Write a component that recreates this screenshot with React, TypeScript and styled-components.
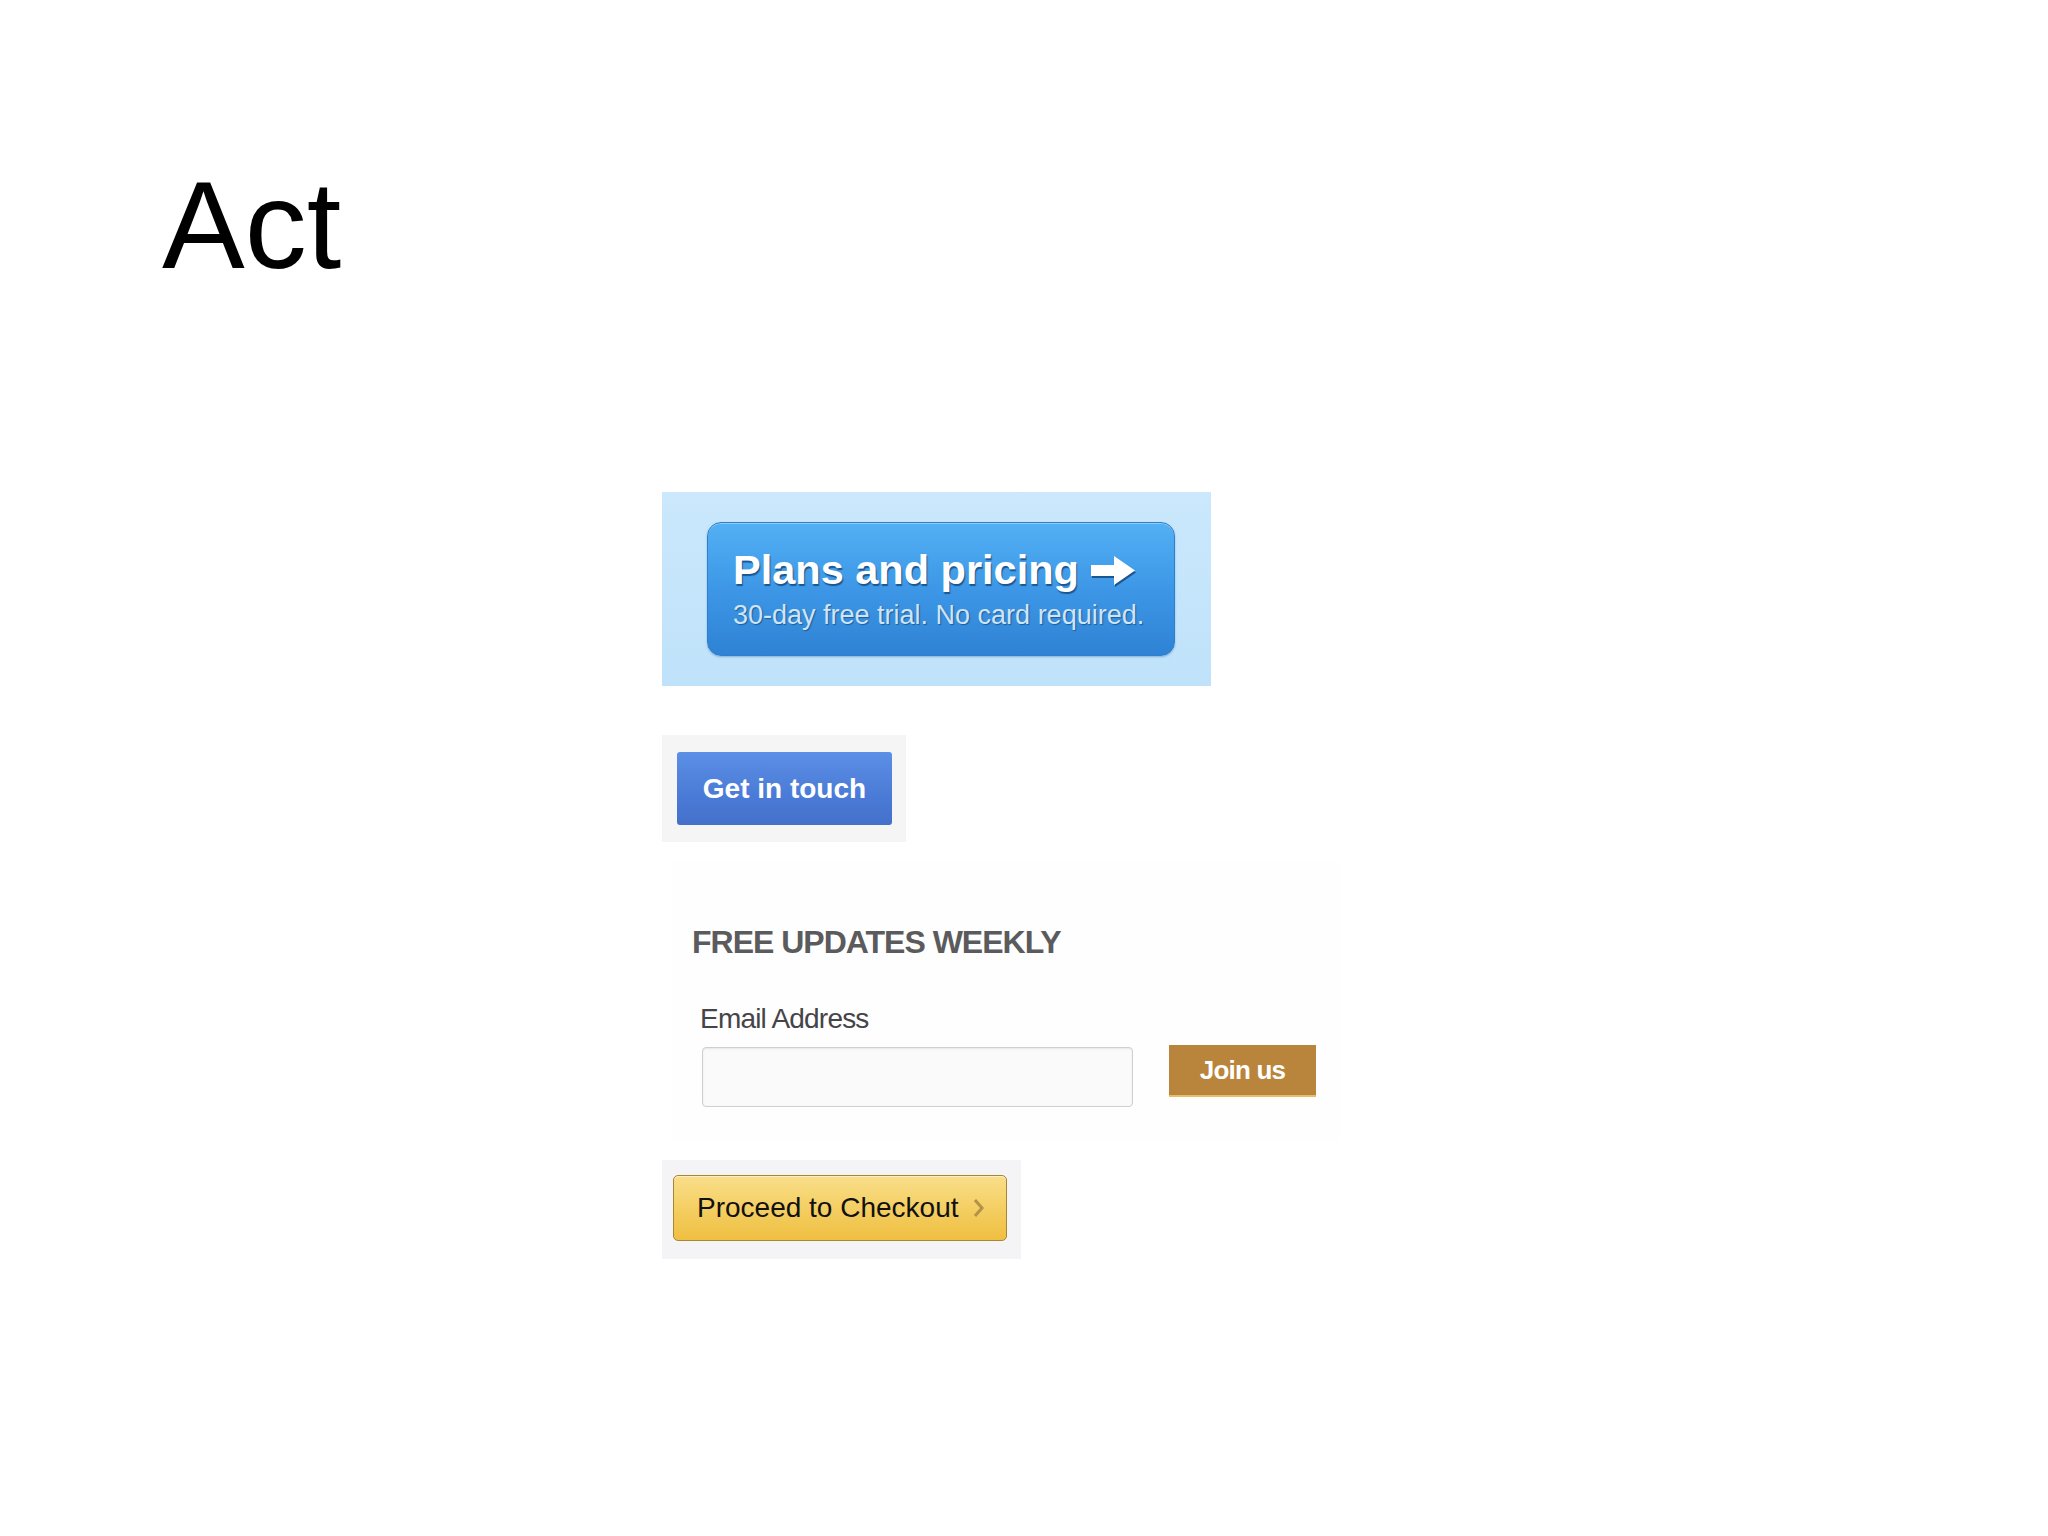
import React from 'react';
import styled, { createGlobalStyle } from 'styled-components';

const GlobalStyle = createGlobalStyle`
  html, body {
    margin: 0;
    padding: 0;
    background: #ffffff;
  }
  body {
    font-family: 'Liberation Sans', Arial, sans-serif;
  }
`;

const Page = styled.div`
  width: 2048px;
  min-height: 1536px;
  box-sizing: border-box;
  padding: 163px 0 0 162px;
`;

const Title = styled.h1`
  margin: 0;
  font-size: 124px;
  line-height: 124px;
  font-weight: 400;
  color: #000;
`;

const Column = styled.div`
  display: flex;
  flex-direction: column;
  align-items: flex-start;
  margin: 205px 0 0 500px;
`;

const PricingPanel = styled.div`
  width: 549px;
  box-sizing: border-box;
  padding: 30px 36px 30px 45px;
  background: linear-gradient(180deg, #cbe8fc 0%, #bfe2fa 100%);
`;

const PricingButton = styled.button`
  display: flex;
  flex-direction: column;
  align-items: flex-start;
  width: 468px;
  height: 134px;
  box-sizing: border-box;
  padding: 24px 0 0 25px;
  border: 1px solid #2f7fcc;
  border-radius: 14px;
  background: linear-gradient(180deg, #52b0f4 0%, #3d97e6 50%, #2f82d4 100%);
  box-shadow: inset 0 1px 0 rgba(255, 255, 255, 0.35), 0 1px 2px rgba(20, 80, 150, 0.35);
  font-family: 'Liberation Sans', Arial, sans-serif;
  cursor: pointer;
`;

const PricingHeadline = styled.span`
  display: flex;
  align-items: center;
  gap: 12px;
  font-size: 41.5px;
  line-height: 46px;
  font-weight: 700;
  color: #ffffff;
  text-shadow: 1px 2px 1px #1b5690;

  svg {
    filter: drop-shadow(1px 2px 0 #1b5690);
  }
`;

const PricingSub = styled.span`
  margin-top: 6px;
  font-size: 27px;
  line-height: 32px;
  letter-spacing: 0;
  color: #cfe4f7;
  text-shadow: 1px 1px 1px #1d5d99;
`;

const TouchPanel = styled.div`
  margin-top: 49px;
  padding: 17px 14px 17px 15px;
  background: #f5f5f6;
`;

const TouchButton = styled.button`
  width: 215px;
  height: 73px;
  border: none;
  border-radius: 3px;
  background: linear-gradient(180deg, #5c8fe6 0%, #4a7bd6 60%, #4470cb 100%);
  color: #ffffff;
  font-family: 'Liberation Sans', Arial, sans-serif;
  font-size: 28px;
  font-weight: 700;
  cursor: pointer;
`;

const NewsletterPanel = styled.div`
  margin-top: 20px;
  margin-left: 10px;
  width: 668px;
  box-sizing: border-box;
  padding: 62px 20px 33px 20px;
  background: #fefefe;
`;

const NewsletterHeading = styled.h3`
  margin: 0;
  font-size: 32px;
  line-height: 36px;
  font-weight: 700;
  letter-spacing: -1px;
  color: #5b5b5d;
`;

const FieldLabel = styled.label`
  display: block;
  margin: 43px 0 0 8px;
  font-size: 28px;
  line-height: 32px;
  letter-spacing: -0.8px;
  color: #454548;
`;

const FormRow = styled.div`
  display: flex;
  align-items: flex-start;
  gap: 36px;
  margin: 12px 0 0 10px;
`;

const EmailInput = styled.input`
  width: 431px;
  height: 60px;
  box-sizing: border-box;
  border: 1px solid #cfcfd2;
  border-radius: 4px;
  background: #fafafb;
  box-shadow: inset 0 1px 2px rgba(0, 0, 0, 0.08);
  font-size: 24px;
  padding: 0 12px;
`;

const JoinButton = styled.button`
  margin-top: -2px;
  width: 147px;
  height: 52px;
  border: none;
  border-bottom: 2px solid #e5c068;
  background: #b9853c;
  color: #ffffff;
  font-family: 'Liberation Sans', Arial, sans-serif;
  font-size: 26px;
  font-weight: 700;
  letter-spacing: -0.8px;
  cursor: pointer;
`;

const CheckoutPanel = styled.div`
  margin-top: 20px;
  padding: 15px 14px 18px 11px;
  background: #f4f4f6;
`;

const CheckoutButton = styled.button`
  display: flex;
  align-items: center;
  gap: 14px;
  width: 334px;
  height: 66px;
  box-sizing: border-box;
  padding: 0 0 0 23px;
  border: 1px solid #a88734;
  border-radius: 5px;
  background: linear-gradient(180deg, #f9de8a 0%, #f4cf63 50%, #efbf41 100%);
  box-shadow: inset 0 1px 0 rgba(255, 255, 255, 0.5);
  color: #111111;
  font-family: 'Liberation Sans', Arial, sans-serif;
  font-size: 28px;
  cursor: pointer;
`;

const ArrowIcon = () => (
  <svg width="45" height="33" viewBox="0 0 45 33">
    <path d="M0 11 H23 V2 L44 16.5 L23 31 V22 H0 Z" fill="#ffffff" />
  </svg>
);

const Chevron = () => (
  <svg width="12" height="20" viewBox="0 0 12 20">
    <path d="M2 2 L9 10 L2 18" fill="none" stroke="#b39247" strokeWidth="3" />
  </svg>
);

const App: React.FC = () => {
  return (
    <>
      <GlobalStyle />
      <Page>
        <Title>Act</Title>
        <Column>
          <PricingPanel>
            <PricingButton>
              <PricingHeadline>
                Plans and pricing
                <ArrowIcon />
              </PricingHeadline>
              <PricingSub>30-day free trial. No card required.</PricingSub>
            </PricingButton>
          </PricingPanel>

          <TouchPanel>
            <TouchButton>Get in touch</TouchButton>
          </TouchPanel>

          <NewsletterPanel>
            <NewsletterHeading>FREE UPDATES WEEKLY</NewsletterHeading>
            <FieldLabel htmlFor="email">Email Address</FieldLabel>
            <FormRow>
              <EmailInput id="email" type="email" />
              <JoinButton>Join us</JoinButton>
            </FormRow>
          </NewsletterPanel>

          <CheckoutPanel>
            <CheckoutButton>
              Proceed to Checkout
              <Chevron />
            </CheckoutButton>
          </CheckoutPanel>
        </Column>
      </Page>
    </>
  );
};

export default App;
